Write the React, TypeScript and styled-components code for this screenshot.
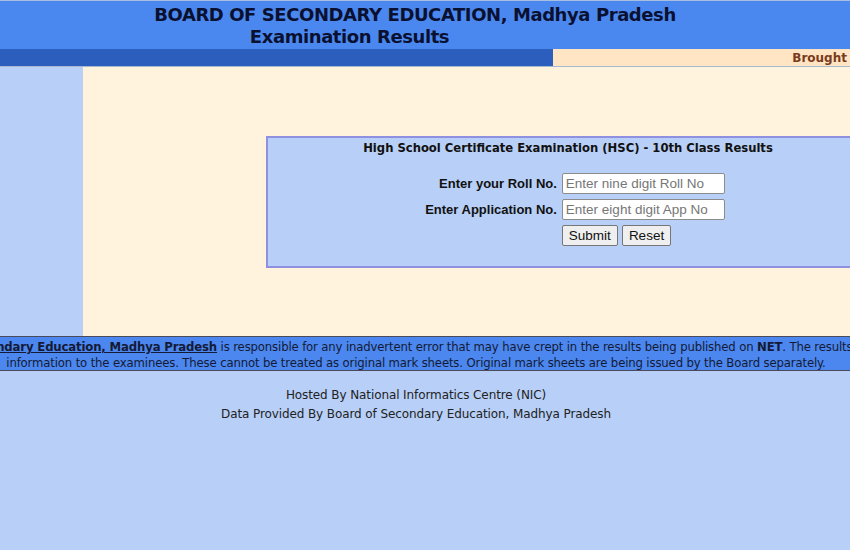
import * as React from 'react';
import styled, { createGlobalStyle } from 'styled-components';

const GlobalStyle = createGlobalStyle`
  html, body {
    margin: 0;
    padding: 0;
    background: #b8d0f8;
    overflow: hidden;
  }
  body {
    font-family: "DejaVu Sans", Verdana, sans-serif;
  }
`;

const Page = styled.div`
  width: 850px;
  height: 550px;
  overflow: hidden;
  background: #b8d0f8;
  border-top: 1px solid #a9bde0;
  box-sizing: border-box;
`;

const Header = styled.header`
  height: 48px;
  background: #4a88f0;
  display: flex;
  flex-direction: column;
  align-items: center;
  color: #0a1030;
`;

const Title = styled.h1`
  margin: 3px 20px 0 0;
  font-size: 18px;
  font-weight: bold;
  line-height: 22px;
  letter-spacing: -0.42px;
  white-space: nowrap;
`;

const SubTitle = styled.h2`
  margin: 0 0 0 -151px;
  font-size: 18px;
  font-weight: bold;
  line-height: 22px;
  letter-spacing: -0.42px;
  white-space: nowrap;
`;

const NavBar = styled.div`
  display: grid;
  grid-template-columns: 553px 1fr;
  height: 17px;
  border-bottom: 1px solid #a8b8d0;
`;

const NavLeft = styled.div`
  background: #2c5ebe;
`;

const NavRight = styled.div`
  background: #ffe5c3;
  color: #7a3a1c;
  font-size: 12px;
  font-weight: bold;
  line-height: 15px;
  padding: 2px 3px 0 0;
  text-align: right;
  white-space: nowrap;
  overflow: hidden;
`;

const Main = styled.div`
  display: grid;
  grid-template-columns: 83px 1fr;
  height: 269px;
`;

const SideColumn = styled.div`
  background: #b8d0f8;
`;

const ContentArea = styled.div`
  background: #fff3de;
  padding: 69px 0 0 183px;
  overflow: hidden;
`;

const FormBox = styled.div`
  width: 604px;
  height: 132px;
  box-sizing: border-box;
  background: #b8cff7;
  border: 2px solid #8f90e2;
  display: flex;
  flex-direction: column;
  align-items: center;
`;

const FormTitle = styled.div`
  margin-top: 2px;
  font-size: 11.6px;
  font-weight: bold;
  color: #111;
  line-height: 16px;
  white-space: nowrap;
`;

const FormGrid = styled.div`
  margin-top: 17px;
  margin-left: 14px;
  display: grid;
  grid-template-columns: auto 163px;
  column-gap: 5px;
  row-gap: 5px;
  align-items: center;
  font-family: "Liberation Sans", Arial, sans-serif;
`;

const Label = styled.label`
  font-size: 13px;
  font-weight: bold;
  color: #111;
  text-align: right;
  white-space: nowrap;
`;

const TextInput = styled.input`
  width: 163px;
  height: 21px;
  box-sizing: border-box;
  border: 1px solid #8c8c8c;
  border-radius: 2px;
  padding: 1px 3px;
  font-family: "Liberation Sans", Arial, sans-serif;
  font-size: 13.5px;
  background: #fff;
  &::placeholder {
    color: #767676;
  }
`;

const Buttons = styled.div`
  grid-column: 2;
  display: flex;
  gap: 4px;
`;

const Button = styled.button`
  height: 21px;
  padding: 0 6px;
  font-family: "Liberation Sans", Arial, sans-serif;
  font-size: 13.5px;
  color: #111;
  background: #efefef;
  border: 1px solid #767676;
  border-radius: 2px;
`;

const Disclaimer = styled.div`
  height: 35px;
  box-sizing: border-box;
  background: #4b87ee;
  border-top: 1px solid #4a4a5a;
  border-bottom: 1px solid #4a4a5a;
  overflow: hidden;
`;

const DisclaimerText = styled.p`
  width: 1600px;
  margin: 0 0 0 -384px;
  padding-top: 2px;
  text-align: center;
  white-space: nowrap;
  font-size: 11.7px;
  line-height: 16px;
  letter-spacing: -0.15px;
  color: #141a36;
  a {
    color: #141a36;
    font-weight: bold;
    text-decoration: underline;
  }
  b {
    font-weight: bold;
  }
`;

const Footer = styled.footer`
  padding: 15px 18px 0 0;
  text-align: center;
  font-size: 12px;
  line-height: 19px;
  letter-spacing: -0.1px;
  color: #222;
`;

const FooterLine = styled.div``;

const App: React.FC = () => {
  return (
    <>
      <GlobalStyle />
      <Page>
        <Header>
          <Title>BOARD OF SECONDARY EDUCATION, Madhya Pradesh</Title>
          <SubTitle>Examination Results</SubTitle>
        </Header>
        <NavBar>
          <NavLeft />
          <NavRight>Brought</NavRight>
        </NavBar>
        <Main>
          <SideColumn />
          <ContentArea>
            <FormBox>
              <FormTitle>High School Certificate Examination (HSC) - 10th Class Results</FormTitle>
              <FormGrid>
                <Label htmlFor="roll">Enter your Roll No.</Label>
                <TextInput id="roll" placeholder="Enter nine digit Roll No" />
                <Label htmlFor="app">Enter Application No.</Label>
                <TextInput id="app" placeholder="Enter eight digit App No" />
                <Buttons>
                  <Button type="button">Submit</Button>
                  <Button type="reset">Reset</Button>
                </Buttons>
              </FormGrid>
            </FormBox>
          </ContentArea>
        </Main>
        <Disclaimer>
          <DisclaimerText>
            Neither NIC nor <a href="#">Board of Secondary Education, Madhya Pradesh</a> is responsible for any
            inadvertent error that may have crept in the results being published on <b>NET</b>. The results are
            meant for an immediate
            <br />
            information to the examinees. These cannot be treated as original mark sheets. Original mark sheets
            are being issued by the Board separately.
          </DisclaimerText>
        </Disclaimer>
        <Footer>
          <FooterLine>Hosted By National Informatics Centre (NIC)</FooterLine>
          <FooterLine>Data Provided By Board of Secondary Education, Madhya Pradesh</FooterLine>
        </Footer>
      </Page>
    </>
  );
};

export default App;
